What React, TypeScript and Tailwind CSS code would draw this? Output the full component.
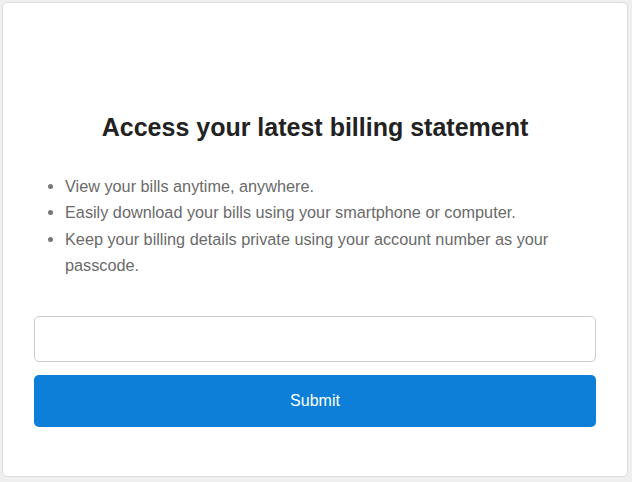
import React from 'react';

const points = [
  'View your bills anytime, anywhere.',
  'Easily download your bills using your smartphone or computer.',
  'Keep your billing details private using your account number as your passcode.',
];

export default function App() {
  return (
    <div className="min-h-screen w-full bg-[#efefef] pl-[2px] pt-[2px] font-['Liberation_Sans',Arial,sans-serif]">
      <div className="w-[626px] h-[475px] rounded-[5px] border border-[#dcdcdc] bg-white px-[31px] pt-[108px]">
        {/* Title */}
        <h1 className="text-center text-[25px] leading-[32px] font-bold text-[#222]">
          Access your latest billing statement
        </h1>

        {/* Benefits */}
        <ul className="mt-[30px] list-disc pl-[31px] text-[16.25px] leading-[26.3px] text-[#6a6a6a] marker:text-[#777]">
          {points.map((p) => (
            <li key={p}>{p}</li>
          ))}
        </ul>

        {/* Form */}
        <form className="mt-[38px] flex flex-col gap-[13px]" onSubmit={(e) => e.preventDefault()}>
          <input
            type="text"
            className="h-[46px] w-full rounded-[5px] border border-[#cccccc] bg-white px-3 text-[16px] outline-none"
          />
          <button
            type="submit"
            className="h-[52px] w-full rounded-[5px] bg-[#0d7fd8] text-[16px] text-white"
          >
            Submit
          </button>
        </form>
      </div>
    </div>
  );
}
